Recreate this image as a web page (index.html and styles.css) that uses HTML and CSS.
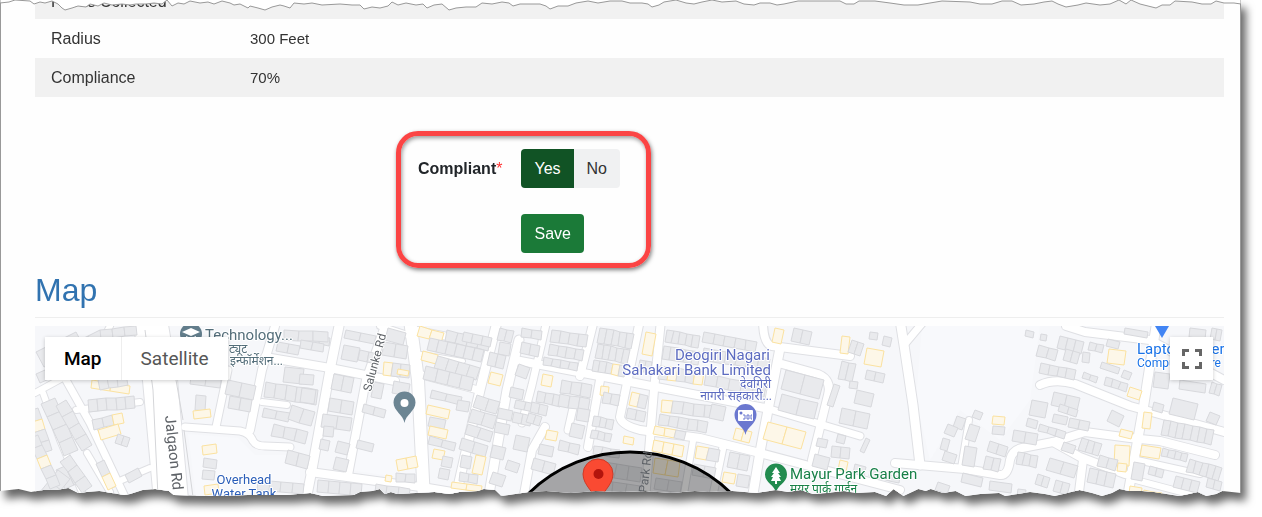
FILE: index.html
```
<!DOCTYPE html>
<html lang="en">
<head>
    <meta charset="UTF-8">
    <meta name="viewport" content="width=device-width, initial-scale=1.0">
    <title>Compliance</title>
    <link rel="stylesheet" href="styles.css">
</head>
<body>
    <div class="paper">
        <main class="sheet">
            <!-- Details -->
            <table class="details">
                <tbody>
                    <tr><th scope="row">Points Collected</th><td></td></tr>
                    <tr><th scope="row">Radius</th><td>300 Feet</td></tr>
                    <tr><th scope="row">Compliance</th><td>70%</td></tr>
                </tbody>
            </table>

            <!-- Compliant form -->
            <form class="compliant-form">
                <span class="field-label" id="compliantLabel">Compliant<span class="required">*</span></span>
                <div class="btn-group" role="radiogroup" aria-labelledby="compliantLabel">
                    <input type="radio" name="compliant" id="compliantYes" value="yes" checked>
                    <label for="compliantYes">Yes</label>
                    <input type="radio" name="compliant" id="compliantNo" value="no">
                    <label for="compliantNo">No</label>
                </div>
                <button type="button" class="btn-save">Save</button>
            </form>

            <h2>Map</h2>

            <!-- Map -->
            <div class="map">
                <svg class="map-canvas" viewBox="35 326 1189 171" preserveAspectRatio="xMinYMin slice" role="img" aria-label="Map">
                    <rect class="land" x="35" y="326" width="1189" height="171"/>
                    <path class="open-land" d="M922 326H1040L1030 400L1000 440L960 410L930 460L916 400Z"/>
                    <path class="open-land" d="M188 434L238 438L255 455L300 455L300 497H196Z"/>
                    <path class="open-land" d="M372 390L415 390L418 480L350 470Z"/>
                    <g id="roads"></g>
                    <g id="buildings"></g>
                    <path class="median" d="M145 330L153 390L158 497M176 380L183 420M184 430L193 497"/>

                    <!-- Radius -->
                    <circle class="radius" cx="630" cy="597" r="145"/>

                    <!-- Pins -->
                    <g>
                        <circle cx="191" cy="334" r="11" fill="#627d8b"/>
                        <path d="M182 332l9-4 9 4-9 4zM186 336v3l5 3 5-3v-3l-5 2z" fill="#fff"/>
                    </g>
                    <g>
                        <path d="M404.500 423c-1-8-11-12-11-20.500a11 11 0 0 1 22 0c0 8.500-10 12.500-11 20.500z" fill="#6c8593"/>
                        <circle cx="404.500" cy="403" r="4" fill="#fff"/>
                    </g>
                    <g>
                        <path d="M745.500 435c-1-8-11-11-11-20a11 11 0 0 1 22 0c0 9-10 12-11 20z" fill="#6b78cf"/>
                        <rect x="738" y="410" width="15" height="11" rx="1" fill="#fff"/>
                        <circle cx="741" cy="413" r="1.500" fill="#6b78cf"/>
                        <path d="M743 415h2v4h-2M747 415v4h2v-4zM752 415h-1v4h1" fill="none" stroke="#6b78cf"/>
                    </g>
                    <g>
                        <path d="M776 493c-1-8-11-10-11-18.500a11 11 0 0 1 22 0c0 8.500-10 10.500-11 18.500z" fill="#228b4f"/>
                        <path d="M776 467l4 6h-2l3 4h-2l2 4h-4v3h-2v-3h-4l2-4h-2l3-4h-2z" fill="#fff"/>
                    </g>
                    <path d="M1155 326h14l-7 12z" fill="#4285f4"/>
                    <g>
                        <path d="M598 505c-2-12-15-19-15-31a15 15 0 0 1 30 0c0 12-13 19-15 31z" fill="#fa4a32" stroke="#cf3a26"/>
                        <circle cx="598.500" cy="474" r="5" fill="#b3140c"/>
                    </g>

                    <!-- Labels -->
                    <g class="map-labels">
                        <g class="school">
                            <text x="205" y="340">Technology...</text>
                            <text class="small" x="229" y="353">ट्यूट</text>
                            <text class="small" x="230" y="365">इन्फॉर्मेशन...</text>
                        </g>
                        <g class="bank" text-anchor="end">
                            <text x="770" y="360">Deogiri Nagari</text>
                            <text x="771" y="375">Sahakari Bank Limited</text>
                            <text class="small" x="771" y="388">देवगिरी</text>
                            <text class="small" x="772" y="400">नागरी सहकारी...</text>
                        </g>
                        <g class="park">
                            <text x="790" y="479">Mayur Park Garden</text>
                            <text class="small" x="790" y="493">मयूर पार्क गार्डन</text>
                        </g>
                        <g class="water" text-anchor="middle">
                            <text x="244" y="484">Overhead</text>
                            <text x="244" y="498">Water Tank</text>
                        </g>
                        <g class="shop">
                            <text x="1137" y="354">Laptop Expert</text>
                            <text class="small" x="1137" y="367">Computer Store</text>
                        </g>
                        <g class="road-name">
                            <text transform="translate(165 416) rotate(84)">Jalgaon Rd</text>
                            <text class="small" transform="translate(371 392) rotate(-75)">Salunke Rd</text>
                            <text class="small in-radius" transform="translate(647 493) rotate(-83)">Park Rd</text>
                        </g>
                    </g>
                </svg>

                <div class="map-type">
                    <button type="button" class="active">Map</button>
                    <button type="button">Satellite</button>
                </div>
                <button type="button" class="fullscreen" aria-label="Toggle fullscreen view">
                    <svg viewBox="0 0 20 20" width="20" height="20"><path d="M1.500 7V1.500H7M13 1.500h5.500V7M18.500 13v5.500H13M7 18.500H1.500V13"/></svg>
                </button>
            </div>
        </main>

        <!-- Torn top edge -->
        <svg class="torn-top" viewBox="0 0 1241 14" preserveAspectRatio="none" aria-hidden="true">
            <path d="M0 -2V3L9 2L15 0L30 1L34 4L40 2L45 3L52 1L58 4L62 8L65 10L72 8L78 6L86 7L90 4L98 6L104 3L112 5L122 4L130 5L136 4L146 4L154 3L162 4L167 0L172 6L178 3L184 4L190 1L200 3L208 2L214 4L222 1L230 3L234 5L240 4L248 8L250 6L258 8L265 10L272 7L280 5L284 6L290 8L294 3L304 4L312 3L322 5L340 4L352 5L360 5L364 9L372 7L380 8L388 6L392 2L398 5L406 3L416 5L423 4L427 8L434 5L442 4L449 10L456 8L466 7L476 7L482 3L492 4L502 2L509 3L513 6L520 4L540 4L546 6L550 9L558 6L568 6L576 3L588 1L598 3L610 1L622 1L630 3L642 3L648 4L652 7L659 5L664 2L676 0L686 3L694 4L702 2L712 0L722 2L736 1L744 4L754 5L760 3L770 3L777 5L784 4L798 1H840L846 4L854 4L859 1L875 1L890 3L904 5L918 5L930 3L942 1L970 2L980 4L992 4L1002 1L1012 1L1021 5L1034 4L1044 2L1052 1L1058 4L1066 7L1078 5L1086 3L1100 5L1110 4L1119 0L1126 4L1131 0L1140 4L1148 6L1156 8L1162 5L1170 5L1175 1L1192 2L1202 4L1211 4L1216 1L1224 3L1234 3L1241 4V-2Z"/>
        </svg>
    </div>
    <script src="map.js"></script>
</body>
</html>
```

FILE: styles.css
```
* {
    box-sizing: border-box;
}

body {
    margin: 0;
    padding-bottom: 20px;
    background-color: #fff;
    font-family: "Liberation Sans", Arial, sans-serif;
    font-size: 16px;
    color: #333;
}

/* Torn sheet */
.paper {
    position: relative;
    margin-right: 21px;
    filter: drop-shadow(5px 8px 4px rgba(0, 0, 0, 0.6));
}

.sheet {
    overflow: hidden;
    padding: 0 16px 0 34px;
    background-color: #fefefe;
    border: 1px solid #999;
    border-width: 0 1px;
    clip-path: polygon(
        0 0, 100% 0, 100% calc(100% - 4px),
        98.500% calc(100% - 6px), 98% calc(100% - 3px), 97.200% calc(100% - 1px), 96.500% calc(100% - 5px), 95.800% calc(100% - 3px),
        95% calc(100% - 1px), 94% calc(100% - 3px), 93% calc(100% - 5px), 92% calc(100% - 6px), 91% calc(100% - 6px), 90.200% calc(100% - 8px),
        89.600% calc(100% - 4px), 88.800% calc(100% - 1px), 88% calc(100% - 4px), 87% calc(100% - 7px), 86% calc(100% - 4px), 85% calc(100% - 1px),
        84.200% calc(100% - 3px), 83% calc(100% - 5px), 82% calc(100% - 3px), 81% calc(100% - 1px), 80.500% calc(100% - 4px), 79% calc(100% - 3px),
        77.800% calc(100% - 1px), 77% calc(100% - 6px), 76% calc(100% - 4px), 75% calc(100% - 8px), 74.600% calc(100% - 6px), 74% calc(100% - 8px),
        72.800% calc(100% - 1px), 72% calc(100% - 8px), 71.400% calc(100% - 1px), 70.500% calc(100% - 5px), 69% calc(100% - 4px), 68% calc(100% - 6px),
        66.600% calc(100% - 4px), 65.500% calc(100% - 3px), 64.500% calc(100% - 7px), 63.500% calc(100% - 5px), 62.500% calc(100% - 7px), 61% calc(100% - 4px),
        60% calc(100% - 5px), 59% calc(100% - 6px), 57% calc(100% - 5px), 56% calc(100% - 6px), 54% calc(100% - 4px), 52% calc(100% - 6px),
        50% calc(100% - 5px), 48% calc(100% - 6px), 46% calc(100% - 4px), 44% calc(100% - 6px), 42.600% calc(100% - 5px), 41% calc(100% - 2px),
        40.400% calc(100% - 1px), 39.900% calc(100% - 7px), 39% calc(100% - 8px), 38.500% calc(100% - 6px), 37% calc(100% - 5px), 36.200% calc(100% - 3px),
        35% calc(100% - 5px), 33.500% calc(100% - 4px), 32% calc(100% - 3px), 31.500% calc(100% - 5px), 31% calc(100% - 3px), 30.600% calc(100% - 8px),
        30% calc(100% - 6px), 29% calc(100% - 5px), 28.500% calc(100% - 2px), 26% calc(100% - 1px), 25% calc(100% - 4px), 23% calc(100% - 2px),
        20% calc(100% - 2px), 17% calc(100% - 1px), 14% calc(100% - 2px), 13.600% calc(100% - 6px), 12.500% calc(100% - 8px), 11.500% calc(100% - 7px),
        10.500% calc(100% - 3px), 10% calc(100% - 2px), 9% calc(100% - 4px), 8% calc(100% - 6px), 7% calc(100% - 5px), 6.300% calc(100% - 4px),
        5.500% calc(100% - 9px), 4.500% calc(100% - 7px), 3.500% calc(100% - 7px), 2.500% calc(100% - 5px), 1.500% calc(100% - 8px), 0 calc(100% - 6px)
    );
}

.torn-top {
    position: absolute;
    top: 0;
    left: 0;
    width: 100%;
    height: 14px;
    fill: #fff;
    stroke: #999;
}

/* Details table */
.details {
    width: 100%;
    margin-top: -20px;
    border-collapse: collapse;
}

.details tr {
    height: 39px;
}

.details tr:nth-child(odd) {
    background-color: #f1f1f1;
}

.details th,
.details td {
    padding: 0 16px;
    text-align: left;
    font-weight: normal;
}

.details th {
    width: 199px;
}

.details tr:first-child th {
    padding-top: 4px;
}

.details td {
    font-size: 15px;
}

/* Compliant form */
.compliant-form {
    display: grid;
    grid-template-columns: auto auto;
    align-items: center;
    justify-content: start;
    gap: 26px 19px;
    width: 255px;
    margin: 34px 0 0 361px;
    padding: 13px 17px 10px;
    border: 5px solid #fb4444;
    border-radius: 22px;
    box-shadow: 1px 2px 4px rgba(0, 0, 0, 0.5), inset 1px 2px 4px rgba(0, 0, 0, 0.4);
}

.field-label {
    font-weight: bold;
    color: #212529;
}

.required {
    font-weight: normal;
    color: #f33;
}

.btn-group {
    position: relative;
    display: flex;
}

.btn-group input {
    position: absolute;
    opacity: 0;
}

.btn-group label,
.btn-save {
    height: 39px;
    padding: 0 13px;
    font-family: inherit;
    font-size: 16px;
    line-height: 39px;
    cursor: pointer;
}

.btn-group label {
    background-color: #f0f1f2;
    color: #333;
}

.btn-group label:first-of-type {
    border-radius: 4px 0 0 4px;
}

.btn-group label:last-of-type {
    border-radius: 0 4px 4px 0;
}

.btn-group input:checked + label {
    background-color: #115325;
    color: #fff;
}

.btn-save {
    grid-column: 2;
    justify-self: start;
    border: 0;
    border-radius: 4px;
    background-color: #1b7a38;
    color: #fff;
}

h2 {
    margin: 0 0 8px;
    padding: 2px 0 7px;
    border-bottom: 1px solid #eee;
    font-size: 32px;
    font-weight: normal;
    line-height: 40px;
    color: #3173b0;
}

/* Map */
.map {
    position: relative;
    height: 171px;
    font-family: Roboto, Arial, sans-serif;
}

.map-canvas {
    display: block;
    width: 100%;
    height: 100%;
}

.land {
    fill: #f6f7fa;
}

.open-land {
    fill: #f8f9fc;
}

.road-edge,
.road {
    fill: none;
    stroke-linecap: round;
    stroke-linejoin: round;
}

.road-edge {
    stroke: #dfe0e4;
}

.road {
    stroke: #fff;
}

.median {
    fill: none;
    stroke: #d5d6d9;
}

.building {
    fill: #e9eaed;
    stroke: #d8d9dd;
}

.building.shop-area {
    fill: #fdf7e8;
    stroke: #fbe2a0;
}

.radius {
    fill: rgba(0, 0, 0, 0.33);
    stroke: #000;
    stroke-width: 3;
}

.map-labels {
    font-family: Roboto, "Noto Sans", "Noto Sans Devanagari", sans-serif;
    font-size: 15px;
    stroke: #fff;
    stroke-width: 2;
    stroke-linejoin: round;
    paint-order: stroke;
}

.map-labels .small {
    font-size: 12px;
}

.map-labels .in-radius {
    stroke: none;
}

.school { fill: #546e7a; }
.bank { fill: #5c6bc0; }
.park { fill: #188048; }
.water { fill: #2a5db8; font-size: 13px; }
.shop { fill: #1a73e8; }
.road-name { fill: #5f6368; }

.map-type {
    position: absolute;
    top: 11px;
    left: 10px;
    display: flex;
    box-shadow: 0 1px 4px rgba(0, 0, 0, 0.2);
}

.map-type button,
.fullscreen {
    height: 43px;
    border: 0;
    background-color: #fff;
    cursor: pointer;
}

.map-type button {
    padding: 0 19px;
    font-family: inherit;
    font-size: 19px;
    color: #565656;
}

.map-type button + button {
    border-left: 1px solid #eee;
}

.map-type .active {
    font-weight: 500;
    color: #000;
}

.fullscreen {
    position: absolute;
    top: 11px;
    right: 11px;
    display: grid;
    place-items: center;
    width: 43px;
    padding: 0;
    box-shadow: 0 1px 4px rgba(0, 0, 0, 0.2);
}

.fullscreen path {
    fill: none;
    stroke: #666;
    stroke-width: 3;
}
```

FILE: map.js
```
const SVG_NS = 'http://www.w3.org/2000/svg';

// [path, width]
const roads = [
    ['M43 393L60 440L84 497', 6],
    ['M35 393L68 375L100 345L110 326', 6],
    ['M66 380L90 423L125 497', 7],
    ['M87 453L110 492', 6],
    ['M76 410L140 402', 6],
    ['M110 485L150 468', 6],
    ['M150 320L160 380L171 500', 34],
    ['M185 427L240 431Q250 433 253 441Q256 446 265 446L290 447', 7],
    ['M216 427L228 370', 7],
    ['M250 430L262 370L275 326', 8],
    ['M262 402L287 405', 6],
    ['M265 357L330 368L395 381', 8],
    ['M339 326L330 370L311 475L306 500', 9],
    ['M385 326L366 380L348 475', 8],
    ['M310 472L428 488L500 500', 8],
    ['M380 326L411 336', 6],
    ['M415 330L490 345', 7],
    ['M415 353L463 361', 4],
    ['M418 374L478 390', 7],
    ['M410 320L418 380L424 500', 12],
    ['M496 326L480 390L455 500', 9],
    ['M519 340L507 390L488 500', 9],
    ['M547 320L532 385L522 423', 7],
    ['M545 427L532 450L523 500', 8],
    ['M515 360L620 380L765 408', 8],
    ['M594 320L580 376', 8],
    ['M573 408L568 430', 7],
    ['M600 380L588 447', 8],
    ['M661 320L654 390L645 500', 8],
    ['M640 320L627 383L620 417Q621 425 640 430L700 438L760 453L900 490', 8],
    ['M693 441L683 500', 6],
    ['M723 447L712 500', 7],
    ['M763 320Q763 344 772 346L850 356', 8],
    ['M780 348L768 410L760 452L752 500', 9],
    ['M782 364L818 374Q832 380 828 395L812 460', 8],
    ['M766 408L860 436', 7],
    ['M925 320L904 345', 7],
    ['M900 320L904 345L913 405L920 465', 9],
    ['M895 463L965 469L1000 475Q1008 476 1010 460Q1012 450 1022 448L1053 442L1085 432L1130 438L1160 441L1215 455', 8],
    ['M969 420L961 468', 6],
    ['M1040 385Q1055 378 1075 384L1130 406L1224 432', 8],
    ['M1066 326L1085 332L1150 340L1224 380', 8],
    ['M1157 320L1143 410L1127 500', 9],
    ['M1053 442L1080 457L1125 474', 8],
    ['M1083 460L1078 500', 8],
    ['M1137 460L1200 474', 6],
    ['M1132 479L1200 497', 6]
];

// Rows of buildings: [x1, y1, x2, y2, depth, count, indexes of shop areas]
const rows = [
    [36, 352, 76, 332, 16, 4], [76, 342, 100, 330, 10, 2], [38, 408, 52, 450, 14, 4, [1]],
    [55, 398, 78, 450, 14, 4], [36, 374, 62, 362, 10, 3], [66, 400, 92, 445, 13, 4],
    [56, 470, 74, 462, 20, 2], [40, 492, 58, 470, 15, 2], [38, 435, 60, 485, 12, 5, [2]], [88, 400, 134, 396, 11, 5],
    [92, 380, 130, 386, 8, 2, [0, 1]], [92, 420, 122, 413, 11, 3, [2]],
    [98, 430, 118, 424, 10, 1, [0]], [118, 434, 130, 438, 10, 2],
    [104, 460, 116, 486, 10, 2, [1]], [125, 475, 138, 468, 9, 1], [70, 455, 92, 486, 12, 3],
    [100, 330, 136, 326, 10, 3], [98, 380, 126, 375, 9, 3],
    [192, 370, 222, 374, 14, 2], [196, 395, 206, 396, 15, 1], [193, 411, 210, 409, 8, 1, [0]],
    [228, 380, 256, 386, 14, 2], [230, 396, 252, 400, 13, 2],
    [266, 382, 318, 390, 14, 5], [285, 367, 304, 369, 15, 1], [264, 408, 290, 413, 10, 2],
    [292, 405, 315, 412, 14, 2], [274, 424, 308, 432, 12, 3], [288, 450, 310, 456, 14, 2],
    [202, 446, 216, 444, 9, 1, [0]], [204, 458, 217, 460, 9, 1], [203, 470, 215, 471, 9, 1],
    [204, 486, 218, 484, 9, 1, [0]], [258, 480, 304, 484, 10, 4],
    [310, 335, 330, 338, 9, 2], [284, 330, 328, 332, 9, 3], [278, 342, 300, 346, 9, 2],
    [346, 330, 376, 336, 9, 2], [344, 345, 360, 348, 14, 1], [360, 350, 378, 354, 10, 2],
    [388, 328, 406, 333, 12, 1], [384, 342, 408, 346, 12, 2], [384, 362, 410, 365, 13, 3, [0]],
    [398, 369, 409, 371, 5, 1, [0]], [374, 382, 384, 384, 15, 1], [394, 381, 410, 384, 12, 1],
    [334, 374, 354, 378, 16, 2], [330, 398, 354, 402, 12, 2], [323, 414, 352, 418, 13, 2], [338, 441, 350, 444, 11, 1],
    [324, 426, 334, 427, 10, 1], [321, 439, 330, 441, 10, 1],
    [364, 404, 386, 410, 9, 2], [358, 440, 374, 444, 8, 1], [336, 457, 349, 460, 12, 1],
    [396, 460, 416, 456, 12, 2, [0, 1]], [386, 475, 392, 476, 6, 1, [0]],
    [318, 480, 362, 484, 12, 4], [376, 484, 410, 489, 9, 3], [396, 473, 415, 474, 8, 2],
    [301, 340, 324, 344, 8, 2], [302, 388, 316, 390, 14, 1], [300, 374, 314, 375, 10, 1],
    [420, 326, 444, 333, 10, 2, [0, 1]], [447, 330, 490, 340, 12, 4], [430, 338, 484, 350, 11, 6], [423, 351, 438, 355, 9, 1, [0]],
    [438, 356, 480, 368, 14, 4], [426, 366, 474, 378, 12, 4], [464, 332, 492, 338, 9, 3],
    [432, 390, 462, 397, 9, 2], [428, 405, 450, 410, 9, 1, [0]], [458, 400, 470, 402, 10, 1], [430, 417, 446, 420, 9, 1],
    [430, 426, 448, 430, 9, 1, [0]], [430, 436, 456, 443, 8, 2], [434, 449, 445, 451, 9, 1, [0]],
    [443, 456, 453, 458, 10, 1], [440, 468, 450, 470, 10, 1], [452, 482, 482, 486, 7, 2, [0, 1]],
    [477, 395, 500, 402, 12, 2], [472, 409, 497, 416, 13, 2], [468, 424, 493, 432, 12, 2],
    [462, 438, 488, 446, 10, 2], [476, 455, 486, 457, 18, 1, [0]], [462, 455, 472, 457, 12, 1],
    [460, 472, 478, 475, 8, 2], [500, 328, 514, 331, 12, 2], [500, 342, 511, 344, 12, 1], [490, 352, 506, 356, 12, 2],
    [491, 372, 503, 375, 11, 1, [0]],
    [516, 400, 536, 404, 9, 2], [514, 412, 532, 416, 9, 2], [511, 387, 524, 390, 10, 1],
    [499, 408, 513, 411, 10, 1], [496, 422, 510, 425, 10, 1], [493, 445, 506, 448, 12, 1], [516, 435, 530, 438, 14, 1],
    [508, 460, 520, 464, 10, 1], [493, 472, 506, 476, 12, 1],
    [522, 328, 542, 331, 10, 2], [522, 342, 540, 346, 10, 2], [552, 330, 588, 335, 12, 4],
    [550, 344, 584, 350, 12, 4], [544, 357, 578, 363, 7, 4], [519, 364, 530, 368, 12, 1],
    [543, 374, 553, 376, 11, 1, [0]], [538, 391, 562, 396, 10, 3], [532, 402, 548, 406, 10, 2], [529, 413, 542, 417, 10, 2],
    [562, 380, 592, 385, 12, 3], [560, 394, 590, 399, 12, 3], [578, 408, 590, 410, 12, 1], [547, 430, 558, 432, 9, 1, [0]],
    [594, 416, 614, 420, 10, 3], [592, 430, 612, 434, 9, 3], [572, 423, 585, 426, 13, 1], [601, 386, 609, 387, 9, 1, [0]],
    [540, 444, 554, 447, 10, 1], [534, 458, 556, 464, 10, 2], [560, 440, 580, 445, 10, 2], [594, 446, 620, 450, 9, 3],
    [600, 328, 634, 334, 14, 5], [598, 344, 630, 350, 14, 5], [594, 360, 626, 366, 12, 5, [3]],
    [646, 332, 656, 334, 22, 1, [0]], [667, 330, 700, 336, 12, 5], [640, 360, 652, 362, 12, 2],
    [664, 346, 700, 352, 12, 5], [660, 366, 704, 372, 13, 5, [1, 4]], [704, 332, 757, 342, 11, 5],
    [704, 348, 770, 359, 11, 6], [706, 374, 766, 386, 11, 5], [604, 392, 620, 395, 12, 2], [632, 392, 648, 396, 12, 2, [0]],
    [662, 400, 716, 406, 12, 5, [0]], [628, 408, 646, 412, 11, 2], [660, 414, 708, 422, 10, 5],
    [655, 426, 686, 432, 8, 3, [0, 1]], [712, 404, 726, 407, 14, 1], [736, 428, 752, 432, 10, 2, [0, 1]], [624, 436, 634, 438, 7, 1, [0]],
    [654, 440, 684, 446, 12, 3, [0, 1, 2]], [655, 458, 680, 462, 14, 2, [0, 1]], [697, 446, 720, 450, 12, 2, [0]],
    [694, 464, 716, 468, 12, 2], [730, 452, 750, 456, 14, 2], [724, 472, 736, 474, 10, 1, [0]],
    [738, 474, 750, 476, 12, 1], [604, 462, 642, 468, 13, 3], [600, 480, 640, 486, 10, 3], [656, 478, 682, 482, 12, 2],
    [786, 370, 824, 380, 19, 2], [782, 394, 818, 403, 17, 2], [768, 422, 806, 432, 19, 2, [0, 1]],
    [775, 328, 784, 330, 14, 1, [0]], [794, 328, 812, 332, 13, 2], [842, 336, 850, 337, 17, 1, [0]],
    [852, 340, 864, 344, 12, 2], [867, 348, 884, 351, 16, 1, [0]], [870, 332, 878, 333, 7, 1],
    [884, 336, 892, 338, 9, 1], [842, 361, 856, 364, 18, 2], [867, 370, 885, 374, 10, 2],
    [834, 384, 840, 386, 22, 1], [857, 390, 874, 394, 13, 1], [850, 381, 858, 382, 7, 1],
    [842, 408, 870, 414, 14, 2], [818, 438, 828, 440, 8, 1], [838, 434, 846, 436, 8, 1], [832, 446, 850, 448, 10, 2],
    [815, 454, 830, 458, 12, 1], [840, 460, 848, 462, 10, 1, [0]], [855, 464, 866, 467, 9, 1], [866, 438, 870, 440, 14, 1],
    [870, 470, 900, 477, 7, 3],
    [1026, 330, 1034, 332, 6, 1], [1041, 334, 1047, 335, 6, 1], [1039, 345, 1058, 350, 12, 2],
    [1060, 336, 1084, 342, 11, 3], [1066, 349, 1080, 353, 11, 2], [1041, 363, 1076, 370, 11, 4],
    [1090, 342, 1104, 345, 7, 2], [1083, 352, 1090, 353, 10, 1], [1108, 339, 1120, 342, 7, 1],
    [1109, 349, 1126, 351, 14, 1, [0]], [1102, 362, 1120, 368, 6, 1], [1084, 372, 1098, 377, 7, 2],
    [1124, 370, 1132, 373, 8, 1], [1106, 377, 1128, 384, 8, 3], [1130, 387, 1142, 391, 9, 1, [0]],
    [1054, 392, 1080, 398, 12, 2], [1032, 400, 1048, 403, 15, 1], [1060, 404, 1078, 410, 8, 2],
    [1054, 414, 1068, 417, 8, 1], [1070, 418, 1090, 422, 9, 2], [1028, 418, 1038, 421, 8, 1],
    [1112, 410, 1124, 416, 12, 1], [1014, 430, 1038, 434, 11, 2], [1040, 424, 1066, 432, 8, 3],
    [957, 416, 966, 419, 12, 1], [975, 410, 983, 413, 8, 1], [948, 424, 958, 428, 10, 1],
    [970, 424, 980, 427, 16, 1], [943, 438, 950, 440, 11, 1], [945, 451, 957, 455, 10, 1],
    [965, 446, 977, 448, 19, 1], [993, 416, 1005, 417, 8, 1, [0]], [993, 426, 1005, 427, 8, 1],
    [990, 441, 1008, 447, 10, 2], [986, 456, 1001, 459, 13, 2], [963, 473, 983, 478, 9, 1],
    [990, 481, 1012, 484, 9, 1], [1018, 452, 1038, 456, 12, 3], [938, 482, 950, 486, 8, 1], [1018, 489, 1026, 490, 7, 1],
    [1050, 458, 1078, 466, 13, 2], [1038, 474, 1050, 478, 12, 2], [1056, 480, 1070, 484, 10, 2],
    [1064, 442, 1076, 446, 8, 1], [1082, 438, 1102, 444, 14, 3], [1121, 429, 1133, 432, 7, 1, [0]],
    [1115, 445, 1130, 446, 20, 1, [0]], [1118, 463, 1127, 464, 8, 1, [0]], [1142, 445, 1161, 448, 11, 1, [0]],
    [1144, 412, 1152, 413, 16, 1, [0]], [1090, 468, 1116, 474, 15, 3], [1100, 455, 1118, 460, 10, 2],
    [1155, 372, 1170, 374, 15, 1], [1180, 380, 1206, 384, 9, 1], [1212, 382, 1222, 385, 10, 2],
    [1173, 398, 1198, 404, 16, 1], [1154, 402, 1164, 405, 8, 1], [1210, 412, 1220, 416, 10, 1],
    [1164, 420, 1214, 430, 15, 7], [1163, 448, 1188, 454, 9, 4], [1190, 459, 1222, 468, 12, 5],
    [1134, 462, 1145, 464, 17, 1], [1150, 466, 1164, 470, 9, 2], [1176, 476, 1200, 482, 10, 3],
    [1208, 478, 1222, 482, 9, 2], [1130, 486, 1142, 488, 7, 1, [0]], [1144, 490, 1162, 493, 6, 2, [0, 1]],
    [1190, 328, 1206, 330, 9, 1], [1212, 328, 1222, 330, 12, 2], [1125, 328, 1148, 332, 6, 1]
];

function addShape(parent, tag, attributes) {
    const shape = document.createElementNS(SVG_NS, tag);
    for (const name in attributes) {
        shape.setAttribute(name, attributes[name]);
    }
    parent.appendChild(shape);
}

function drawRoads() {
    const layer = document.getElementById('roads');
    // all edges first, so that crossings stay open
    roads.forEach(([d, width]) => addShape(layer, 'path', { d, class: 'road-edge', 'stroke-width': width + 2 }));
    roads.forEach(([d, width]) => addShape(layer, 'path', { d, class: 'road', 'stroke-width': width }));
}

function drawBuildings() {
    const layer = document.getElementById('buildings');
    rows.forEach(([x1, y1, x2, y2, depth, count, shops = []], row) => {
        const dx = (x2 - x1) / count;
        const dy = (y2 - y1) / count;
        const length = Math.hypot(dx, dy);
        const nx = -dy / length;
        const ny = dx / length;

        for (let i = 0; i < count; i++) {
            const d = count > 1 ? depth + 1 - (i * 3 + row) % 3 : depth;
            const x = x1 + dx * i;
            const y = y1 + dy * i;
            const points = [
                [x, y],
                [x + dx, y + dy],
                [x + dx + nx * d, y + dy + ny * d],
                [x + nx * d, y + ny * d]
            ].map(p => p.map(Math.round).join(',')).join(' ');
            addShape(layer, 'polygon', { points, class: shops.includes(i) ? 'building shop-area' : 'building' });
        }
    });
}

drawRoads();
drawBuildings();
```
